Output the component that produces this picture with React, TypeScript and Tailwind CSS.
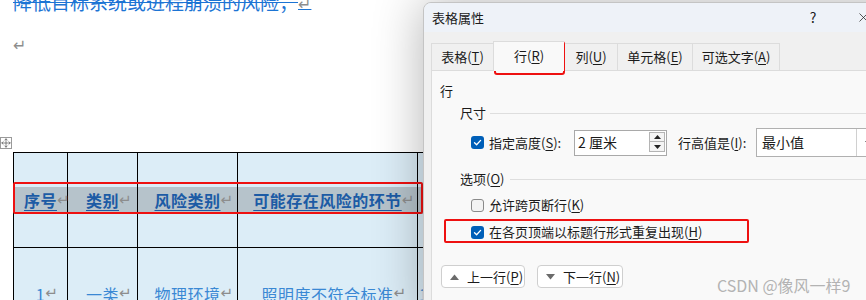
import React from "react";
import { X, Move } from "lucide-react";

const CJK = "font-['Noto_Sans_CJK_SC',sans-serif]";

function Mark() {
  return (
    <span className="inline-block w-0 overflow-visible align-baseline font-['DejaVu_Sans',sans-serif] text-[15px] font-normal text-[#8d8d8d] no-underline">
      ↵
    </span>
  );
}

function Check({ checked }: { checked: boolean }) {
  if (checked) {
    return (
      <span className="flex h-[13px] w-[13px] shrink-0 items-center justify-center rounded-[3px] bg-[#005fb8]">
        <svg width="11" height="11" viewBox="0 0 11 11">
          <polyline points="2.5,5.8 4.6,7.8 8.6,3.4" fill="none" stroke="white" strokeWidth="1.3" strokeLinecap="round" strokeLinejoin="round" />
        </svg>
      </span>
    );
  }
  return <span className="h-[13px] w-[13px] shrink-0 rounded-[3px] border border-[#8a8a8a] bg-[#f3f3f3]" />;
}

function Acc({ pre, k, post = ")" }: { pre: string; k: string; post?: string }) {
  return (
    <span>
      {pre}(<u className="underline-offset-2">{k}</u>{post}
    </span>
  );
}

function Tri({ up }: { up: boolean }) {
  return (
    <svg width="9" height="6" viewBox="0 0 9 6">
      {up ? <polygon points="0,6 4.5,0.5 9,6" fill="#6b6b6b" /> : <polygon points="0,0 4.5,5.5 9,0" fill="#6b6b6b" />}
    </svg>
  );
}

const headers = ["序号", "类别", "风险类别", "可能存在风险的环节", ""];
const row2 = ["1", "一类", "物理环境", "照明度不符合标准"];

export default function App() {
  return (
    <div className={`relative h-[300px] w-[866px] overflow-hidden bg-white ${CJK}`}>
      {/* Document */}
      <div>
        <p className="-mt-[10px] pl-[13px] text-[19px] leading-[24px] text-[#1c74d4] line-through decoration-[#1c74d4]">
          降低目标系统或进程崩溃的风险；
          <span className="font-['DejaVu_Sans',sans-serif] text-[16px] text-[#8d8d8d] no-underline">↵</span>
        </p>
        <p className="mt-[17px] pl-[13px] font-['DejaVu_Sans',sans-serif] text-[16px] leading-[24px] text-[#8d8d8d]">↵</p>
        <div className="mt-[79px] flex h-[12px] w-[12px] items-center justify-center border border-[#9a9a9a] bg-white">
          <Move size={10} strokeWidth={1.5} color="#444" />
        </div>
        <div className="ml-[13px] mt-[3px] grid w-[500px] grid-cols-[54px_70px_100px_180px_96px] border-l border-t border-black bg-[#dcedf7]">
          {headers.map((h, i) => (
            <div key={i} className="flex h-[95px] items-center border-b border-r border-black">
              <div className="flex h-[27px] w-full items-center justify-center bg-[#b6c3cb]">
                {h && (
                  <span className="text-[16px] font-bold tracking-[0.5px] text-[#1c5ba5] underline underline-offset-[3px]">
                    {h}
                  </span>
                )}
                {h && <Mark />}
              </div>
            </div>
          ))}
          {row2.map((h, i) => (
            <div key={i} className="flex h-[95px] items-center justify-center border-r border-black pb-[4px]">
              <span className="text-[16px] tracking-[0.5px] text-[#3a88d4]">{h}</span>
              <Mark />
            </div>
          ))}
          <div className="flex h-[95px] items-center pb-[4px] pl-[1px]">
            <span className="text-[16px] text-[#3a88d4]">1</span>
          </div>
        </div>
      </div>

      {/* red box around header row */}
      <div className="absolute left-[13px] top-[182px] h-[32px] w-[410px] rounded-[2px] border-2 border-[#ee1111]" />

      {/* Dialog */}
      <div className="absolute left-[423px] top-[2px] flex h-[320px] w-[510px] flex-col overflow-hidden rounded-tl-[8px] border border-[#c4c4c4] bg-[#f0f0f0] text-[13px] text-[#1b1b1b] shadow-[0_0_50px_rgba(0,0,0,0.3)]">
        {/* title bar */}
        <div className="flex h-[29px] shrink-0 items-center bg-[#eef2f8] pl-[8px]">
          <span className="flex-1">表格属性</span>
          <span className="w-[42px] text-center text-[14px]">?</span>
          <span className="w-[6px]" />
          <span className="flex w-[46px] justify-center">
            <X size={15} strokeWidth={1.2} color="#222" />
          </span>
          <span className="w-[46px]" />
        </div>
        {/* tab strip */}
        <div className="flex h-[38px] shrink-0 items-end pl-[7px]">
          <div className="flex h-[27px] w-[62px] items-center justify-center border-l border-t border-[#dcdcdc]">
            <Acc pre="表格" k="T" />
          </div>
          <div className="relative z-10 -mb-px flex h-[30px] w-[71px] items-center justify-center border-l border-t border-[#dcdcdc] bg-[#f9f9f9] pb-[2px]">
            <Acc pre="行" k="R" />
          </div>
          <div className="flex h-[27px] w-[53px] items-center justify-center border-l border-t border-[#dcdcdc]">
            <Acc pre="列" k="U" />
          </div>
          <div className="flex h-[27px] w-[75px] items-center justify-center border-l border-t border-[#dcdcdc]">
            <Acc pre="单元格" k="E" />
          </div>
          <div className="flex h-[27px] w-[88px] items-center justify-center border-l border-r border-t border-[#dcdcdc]">
            <Acc pre="可选文字" k="A" />
          </div>
        </div>
        {/* panel */}
        <div className="ml-[7px] flex-1 border-l border-t border-[#dcdcdc] bg-[#f9f9f9] pt-[10px]">
          <div className="flex h-[20px] items-center pl-[8px]">行</div>
          <div className="mt-[2px] flex h-[20px] items-center pl-[28px]">
            <span>尺寸</span>
            <span className="ml-[4px] h-px flex-1 bg-[#dedede]" />
          </div>
          <div className="mt-[5px] flex h-[29px] items-center pl-[39px]">
            <Check checked />
            <span className="w-[90px] pl-[5px]">
              <Acc pre="指定高度" k="S" post="):" />
            </span>
            <div className="flex h-[26px] w-[93px] items-center border border-[#a9a9a9] bg-white">
              <span className="flex-1 pl-[3px] text-[14px]">2 厘米</span>
              <div className="mr-[1px] flex h-[21px] w-[16px] flex-col">
                <span className="flex h-[10px] items-center justify-center border border-[#b4b4b4] bg-[#f4f4f4]">
                  <svg width="7" height="4" viewBox="0 0 7 4"><polygon points="0,4 3.5,0 7,4" fill="#222" /></svg>
                </span>
                <span className="-mt-px flex h-[11px] items-center justify-center border border-[#b4b4b4] bg-[#f4f4f4]">
                  <svg width="7" height="4" viewBox="0 0 7 4"><polygon points="0,0 3.5,4 7,0" fill="#222" /></svg>
                </span>
              </div>
            </div>
            <span className="ml-[11px] w-[78px]">
              <Acc pre="行高值是" k="I" post="):" />
            </span>
            <div className="flex h-[29px] items-center border border-[#b0b0b0] bg-white">
              <span className="w-[99px] pl-[5px] text-[14px]">最小值</span>
              <span className="flex h-full w-[24px] items-center justify-center border-l border-[#d0d0d0]">
                <svg width="9" height="6" viewBox="0 0 9 6"><polyline points="1,1 4.5,4.5 8,1" fill="none" stroke="#888" strokeWidth="1" /></svg>
              </span>
            </div>
          </div>
          <div className="mt-[12px] flex h-[20px] items-center pl-[28px]">
            <Acc pre="选项" k="O" />
            <span className="ml-[6px] h-px flex-1 bg-[#dedede]" />
          </div>
          <div className="mt-[6px] flex h-[20px] items-center pl-[39px]">
            <Check checked={false} />
            <span className="pl-[5px]">
              <Acc pre="允许跨页断行" k="K" />
            </span>
          </div>
          <div className="mt-[7px] flex h-[20px] items-center pl-[39px]">
            <Check checked />
            <span className="pl-[5px]">
              <Acc pre="在各页顶端以标题行形式重复出现" k="H" />
            </span>
          </div>
          <div className="ml-[9px] mt-[23px] flex h-[23px] gap-[12px]">
            <button className="flex h-[23px] w-[84px] items-center gap-[8px] rounded-[4px] border border-[#cfcfcf] bg-white pl-[8px]">
              <Tri up />
              <Acc pre="上一行" k="P" />
            </button>
            <button className="flex h-[23px] w-[86px] items-center gap-[8px] rounded-[4px] border border-[#cfcfcf] bg-white pl-[8px]">
              <Tri up={false} />
              <Acc pre="下一行" k="N" />
            </button>
          </div>
        </div>

        {/* red boxes inside dialog */}
        <div className="absolute left-[70px] top-[38px] h-[34px] w-[71px] rounded-[3px] border-2 border-[#ee1111]" />
        <div className="absolute left-[20px] top-[216px] h-[24px] w-[305px] rounded-[2px] border-2 border-[#ee1111]" />
      </div>

      {/* watermark */}
      <div className="absolute left-[717px] top-[274px] text-[16px] leading-[22px] text-[#b3b3b3]">CSDN @像风一样9</div>
    </div>
  );
}
